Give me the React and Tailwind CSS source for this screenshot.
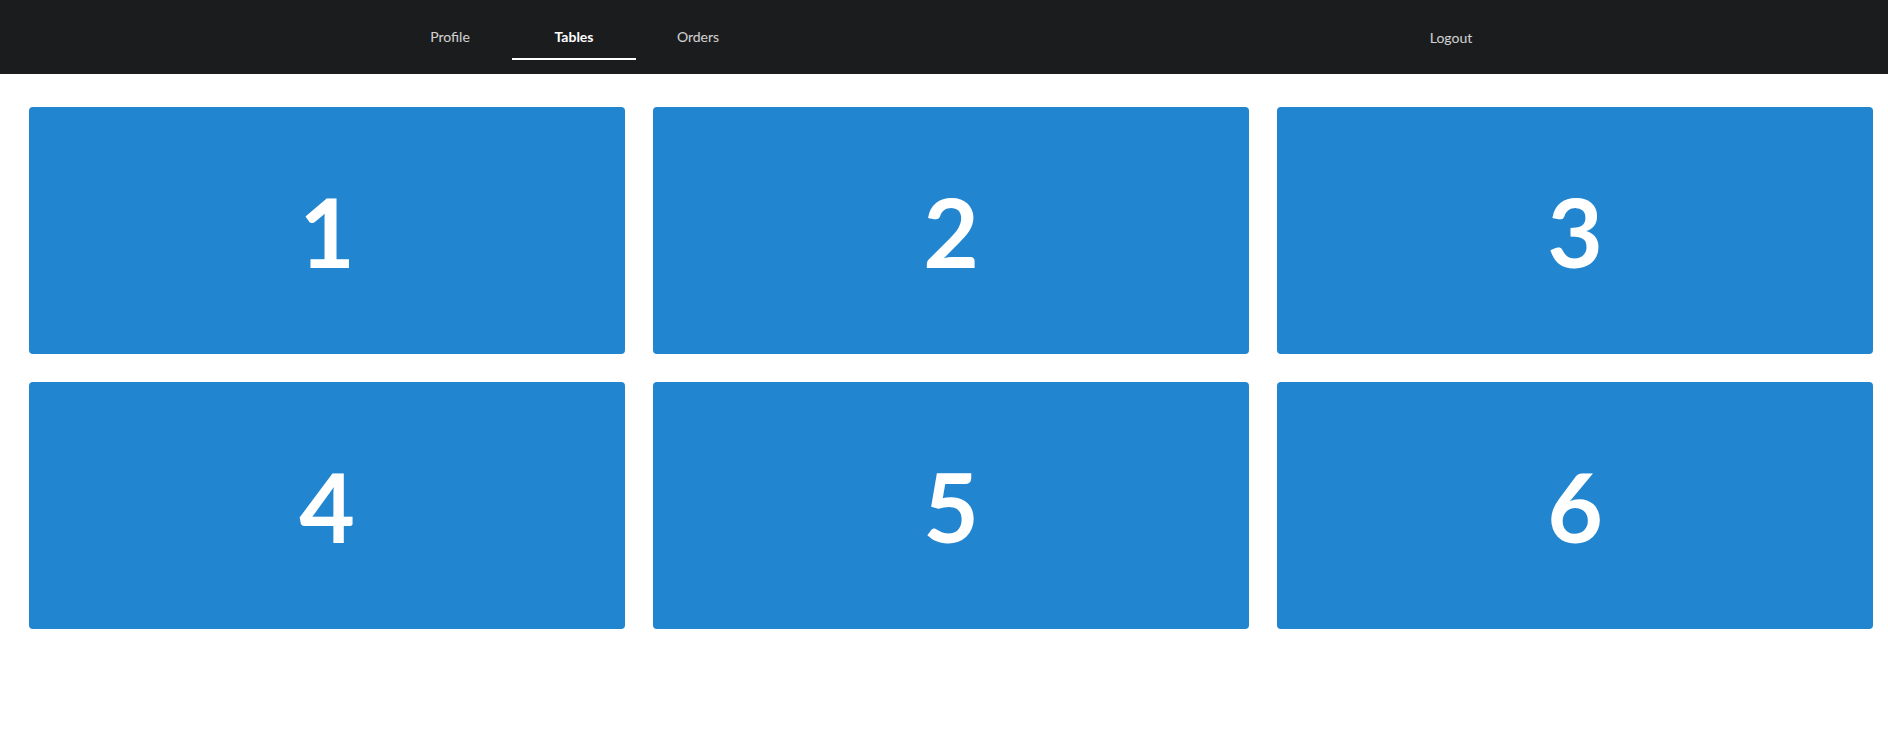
import React from 'react';

const tabs = [
    { label: 'Profile', active: false },
    { label: 'Tables', active: true },
    { label: 'Orders', active: false },
];

const tables = [1, 2, 3, 4, 5, 6];

export default function App() {
    return (
        <div className="min-h-screen bg-white" style={{ fontFamily: 'Lato, "Open Sans", sans-serif' }}>
            {/* top menu */}
            <div className="h-[74px] bg-[#1b1c1d] flex items-stretch">
                <div className="flex items-stretch pl-[388px]">
                    {tabs.map(tab => (
                        <div
                            key={tab.label}
                            className={`w-[124px] flex items-center justify-center text-[14px] border-b-2 ${
                                tab.active
                                    ? 'text-white font-bold border-white'
                                    : 'text-white/80 border-transparent'
                            } mb-[14px] pt-[14px]`}
                        >
                            {tab.label}
                        </div>
                    ))}
                </div>
                <div className="flex items-stretch ml-[629px]">
                    <div className="w-[124px] flex items-center justify-center text-[14px] text-white/80 mb-[14px] pt-[14px]">
                        Logout
                    </div>
                </div>
            </div>

            {/* tables grid */}
            <div className="grid grid-cols-3 gap-[28px] pl-[29px] pr-[15px] pt-[33px]">
                {tables.map(n => (
                    <div
                        key={n}
                        className="h-[247px] rounded bg-[#2185d0] flex items-center justify-center text-white font-bold text-[96px] leading-none"
                    >
                        {n}
                    </div>
                ))}
            </div>
        </div>
    );
}
